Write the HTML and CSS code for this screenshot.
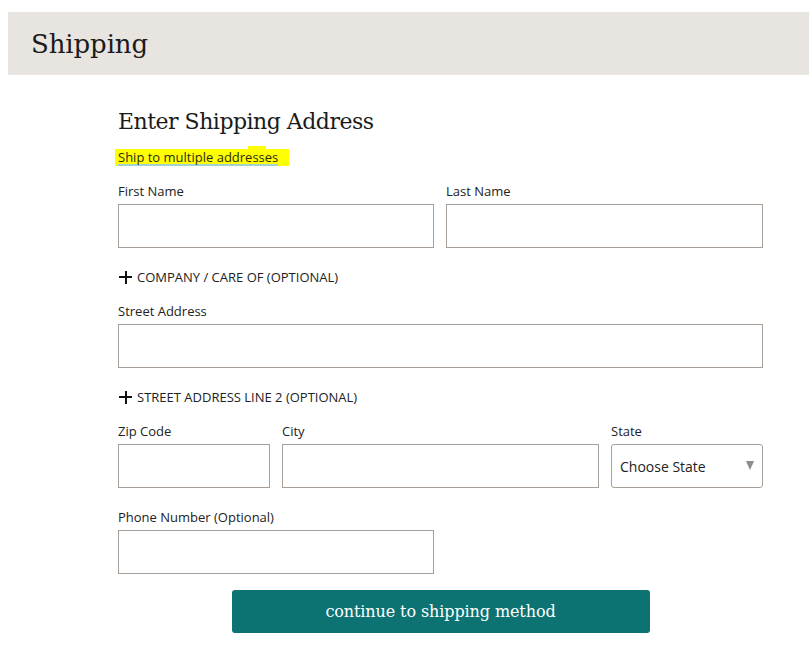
FILE: index.html
```html
<!DOCTYPE html>
<html>
<head>
<meta charset="utf-8">
<link rel="stylesheet" href="styles.css">
</head>
<body>
<div class="page">
  <header class="band"><h1 class="band-title">Shipping</h1></header>
  <main class="form">
    <h2 class="form-title">Enter Shipping Address</h2>
    <div class="multi"><span class="multi-hl"><a class="multi-link" href="#">Ship to multiple addresses</a></span><span class="bump"></span></div>

    <div class="row row-2">
      <div class="field"><label class="label">First Name</label><div class="input"></div></div>
      <div class="field"><label class="label">Last Name</label><div class="input"></div></div>
    </div>

    <div class="toggle"><span class="plus"></span><span class="toggle-text">COMPANY / CARE OF (OPTIONAL)</span></div>

    <div class="row row-1">
      <div class="field"><label class="label">Street Address</label><div class="input"></div></div>
    </div>

    <div class="toggle"><span class="plus"></span><span class="toggle-text">STREET ADDRESS LINE 2 (OPTIONAL)</span></div>

    <div class="row row-3">
      <div class="field"><label class="label">Zip Code</label><div class="input"></div></div>
      <div class="field"><label class="label">City</label><div class="input"></div></div>
      <div class="field"><label class="label">State</label><div class="input select"><span class="select-text">Choose State</span><span class="caret"></span></div></div>
    </div>

    <div class="row row-2 row-phone">
      <div class="field"><label class="label">Phone Number (Optional)</label><div class="input"></div></div>
    </div>

    <div class="actions"><button class="btn">continue to shipping method</button></div>
  </main>
</div>
</body>
</html>
```

FILE: styles.css
```css
html, body { margin: 0; padding: 0; background: #fff; }
body { font-family: "Open Sans", "Liberation Sans", sans-serif; color: #222; }
.page { padding-top: 12px; }
.band {
  margin-left: 8px;
  height: 63px;
  background: #e8e5e0;
  display: flex;
  align-items: center;
  padding-left: 23px;
}
.band-title {
  margin: 0;
  font-family: "DejaVu Serif", "Liberation Serif", serif;
  font-weight: normal;
  font-size: 26px;
  color: #1b1b1b;
  letter-spacing: -0.1px;
}
.form { margin-left: 118px; width: 645px; }
.form-title {
  margin: 32px 0 0 0;
  font-family: "DejaVu Serif", "Liberation Serif", serif;
  font-weight: normal;
  font-size: 22px;
  line-height: 30px;
  color: #1b1b1b;
  letter-spacing: -0.5px;
}
.multi { position: relative; margin-top: 12px; height: 17px; display: flex; align-items: flex-start; }
.multi-hl {
  display: block;
  background: #ffff00;
  margin-left: -3px;
  padding: 1px 11px 0 3px;
  height: 16px;
}
.multi-link {
  display: block;
  font-size: 13px;
  line-height: 14px;
  color: #2a2a10;
  text-decoration: none;
  border-bottom: 2px solid #a2d2d0;
}
.bump { position: absolute; left: 130px; top: -3px; width: 18px; height: 4px; background: #ffff00; }
.row { display: grid; column-gap: 12px; margin-top: 16px; }
.row-2 { grid-template-columns: 316px 317px; }
.row-1 { grid-template-columns: 645px; }
.row-3 { grid-template-columns: 152px 317px 152px; }
.row-phone { margin-top: 20px; }
.field { display: flex; flex-direction: column; }
.label { font-size: 13px; line-height: 18px; color: #222; margin-bottom: 4px; }
.input {
  box-sizing: border-box;
  height: 44px;
  border: 1px solid #a8a098;
  background: #fff;
}
.select {
  border-radius: 3px;
  display: flex;
  align-items: center;
  justify-content: space-between;
  padding: 0 8px 0 8px;
}
.select-text { font-size: 14px; color: #222; }
.caret {
  width: 0; height: 0;
  border-left: 4px solid transparent;
  border-right: 4px solid transparent;
  border-top: 9px solid #8c8c8c;
  margin-top: -2px;
}
.toggle { display: flex; align-items: center; margin-top: 20px; height: 18px; }
.plus { position: relative; width: 13px; height: 13px; margin-left: 1px; margin-right: 5px; }
.plus::before, .plus::after { content: ""; position: absolute; background: #111; }
.plus::before { left: 0; right: 0; top: 5.5px; height: 2px; }
.plus::after { top: 0; bottom: 0; left: 5.5px; width: 2px; }
.toggle-text { font-size: 13px; color: #222; }
.actions { display: flex; justify-content: center; margin-top: 16px; }
.btn {
  width: 418px;
  height: 43px;
  border: none;
  border-radius: 3px;
  background: #0c7272;
  color: #fff;
  font-family: "DejaVu Serif", "Liberation Serif", serif;
  font-size: 16px;
  letter-spacing: -0.1px;
}
```
